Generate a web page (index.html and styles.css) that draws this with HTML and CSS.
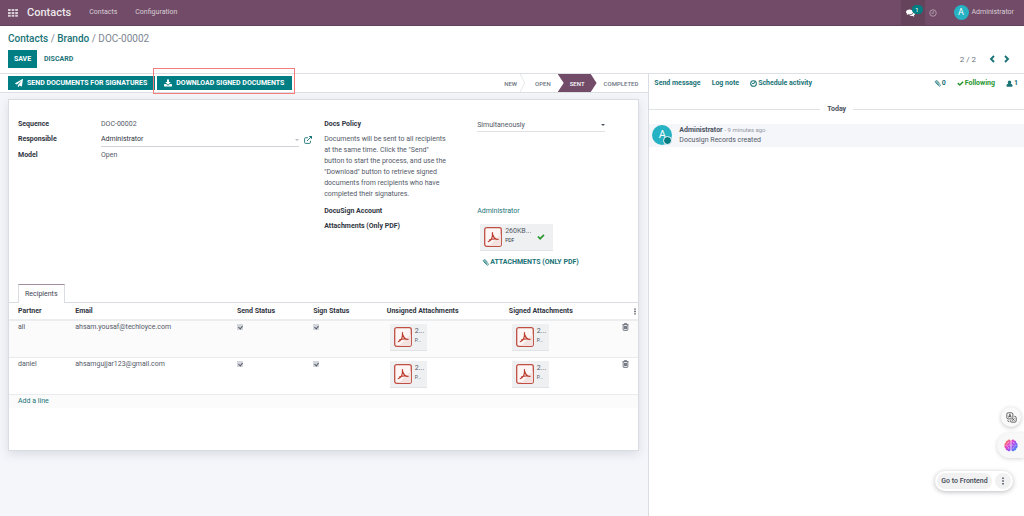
FILE: index.html
```html
<!DOCTYPE html>
<html lang="en">
<head>
<meta charset="utf-8">
<title>Contacts - DOC-00002</title>
<link rel="stylesheet" href="styles.css">
</head>
<body>
<svg class="sprite" aria-hidden="true">
  <symbol id="grid" viewBox="0 0 10 8"><path d="M0 0h2.700v2H0zM3.600 0h2.700v2H3.600zM7.200 0h2.700v2H7.200zM0 2.900h2.700v2H0zM3.600 2.900h2.700v2H3.600zM7.200 2.900h2.700v2H7.200zM0 5.800h2.700v2H0zM3.600 5.800h2.700v2H3.600zM7.200 5.800h2.700v2H7.200z"/></symbol>
  <symbol id="plane" viewBox="0 0 1792 1792"><path d="M1764 11q33 24 27 64l-256 1536q-5 29-32 45-14 8-31 8-11 0-24-5l-453-185-242 295q-18 23-49 23-13 0-22-4-19-7-30.500-23.500t-11.500-36.500v-349l864-1059-1069 925-395-162q-37-14-40-55-2-40 32-59l1664-960q15-9 32-9 20 0 36 11z"/></symbol>
  <symbol id="download" viewBox="0 0 16 16"><path d="M6 1h4v5h3.500L8 11.500 2.500 6H6zM1 10h3.500L7 12.500q1 .8 2 0L11.500 10H15q1 0 1 1v3q0 1-1 1H1q-1 0-1-1v-3q0-1 1-1z"/></symbol>
  <symbol id="comments" viewBox="0 0 18 16"><path d="M7 1c4 0 7 2.200 7 5s-3 5-7 5c-.8 0-1.500-.1-2.200-.3C3.500 11.700 2 12 1 12c.8-.7 1.300-1.400 1.400-2.400C.9 8.700 0 7.400 0 6c0-2.800 3-5 7-5z"/><path d="M15.200 5.500c1.700.9 2.800 2.300 2.800 3.900 0 1.400-.8 2.600-2.200 3.500.1.900.6 1.700 1.400 2.300-1.400 0-2.800-.4-3.900-1.300-2.500.4-5.300-.2-6.800-1.500 4.700 0 9-2.400 8.700-6.900z"/></symbol>
  <symbol id="clock" viewBox="0 0 16 16"><g fill="none" stroke="currentColor" stroke-width="2"><circle cx="8" cy="8" r="6.500"/><path d="M8.500 4v4.500H5"/></g></symbol>
  <symbol id="clock-check" viewBox="0 0 16 16"><g fill="none" stroke="currentColor" stroke-width="2.400"><circle cx="8" cy="8" r="6.500"/><path d="M5 8h3.500L12 3.500"/></g></symbol>
  <symbol id="left" viewBox="0 0 12 16"><path d="M10 2L4 8l6 6" fill="none" stroke="currentColor" stroke-width="3.800"/></symbol>
  <symbol id="right" viewBox="0 0 12 16"><path d="M2 2l6 6-6 6" fill="none" stroke="currentColor" stroke-width="3.800"/></symbol>
  <symbol id="clip" viewBox="0 0 16 16"><path d="M12.500 7L7 1.800C5 .2 1.500 3.200 3.300 5.500l7.500 7.800c2.500 2.300 5-.4 3-2.700L7.500 4.300C6 3.200 4.500 4.700 5.700 6.200L11 11.500" fill="none" stroke="currentColor" stroke-width="1.800"/></symbol>
  <symbol id="check" viewBox="0 0 1792 1792"><path d="M1671 566q0 40-28 68l-724 724-136 136q-28 28-68 28t-68-28l-136-136-362-362q-28-28-28-68t28-68l136-136q28-28 68-28t68 28l294 295 656-657q28-28 68-28t68 28l136 136q28 28 28 68z"/></symbol>
  <symbol id="user" viewBox="0 0 14 16"><path d="M7 1a4 4 0 0 1 4 4c0 1.500-.6 2.800-1.500 3.500 3 .3 4.500 2 4.500 5 0 1-.9 1.800-2 1.800H2c-1.100 0-2-.8-2-1.800 0-3 1.500-4.700 4.500-5C3.600 7.800 3 6.500 3 5a4 4 0 0 1 4-4z"/></symbol>
  <symbol id="external" viewBox="0 0 16 16"><path d="M8 3.500H3Q1.200 3.500 1.200 5.200V13q0 1.800 1.800 1.800h8q1.800 0 1.800-1.800V9.500M6 10l7.500-7.500" fill="none" stroke="currentColor" stroke-width="1.800"/><path d="M9.500 0H16v6.500z"/></symbol>
  <symbol id="trash" viewBox="0 0 14 16"><path d="M1 3.300h12M4.800 3V1.200h4.400V3M2.300 3.500v9.800q0 1.500 1.500 1.500h6.400q1.500 0 1.500-1.500V3.500M5 5.800v6.500M7 5.800v6.500M9 5.800v6.500" fill="none" stroke="currentColor" stroke-width="1.400"/></symbol>
  <symbol id="dots" viewBox="0 0 4 16"><path d="M.5 1h3v3h-3zM.5 6.500h3v3h-3zM.5 12h3v3h-3z"/></symbol>
  <symbol id="pdf" viewBox="0 0 18 20"><rect x=".7" y=".7" width="16.600" height="18.600" rx="2" fill="#fdf6f5" stroke="#bf4f43" stroke-width="1.300"/><path d="M5 19L17 7v10.500q0 1.500-1.500 1.500z" fill="#f3e2e0"/><path d="M8.500 5.500c.2 3 .2 4.500-1 6.500-1 1.600-2.200 2.700-3.200 2.700M8.700 7.500c.7 2.800 2.300 4.700 5.300 5M5.500 13c2.500-1.300 5-1.500 8.500-.7" fill="none" stroke="#bb3d30" stroke-width="1.200" stroke-linecap="round"/></symbol>
  <symbol id="translate" viewBox="0 0 20 20"><g fill="none" stroke="currentColor" stroke-width="1.600"><rect x="1.500" y="1.500" width="11" height="11" rx="2.500"/><path d="M4.500 10L7 4l2.500 6M5.300 8.300h3.400M15 8h1q2.500 0 2.500 2.500V16q0 2.500-2.500 2.500h-5.500Q8 18.500 8 16v-1M11 16l4.500-4.500M11.500 12l4 4M3 15q.3 2.500 3 2.700"/></g></symbol>
  <symbol id="brain" viewBox="0 0 24 22">
    <linearGradient id="tint" gradientUnits="userSpaceOnUse" x1="2" y1="2" x2="22" y2="20"><stop offset="0" stop-color="#ff8a3c"/><stop offset=".35" stop-color="#e645c8"/><stop offset=".65" stop-color="#8b55f6"/><stop offset="1" stop-color="#2fa4f8"/></linearGradient>
    <path fill="url(#tint)" d="M11.300 2.500C10.300.2 7 .3 6.200 2.500 3.800 2.600 2.700 4.500 3.200 6.400.8 7.200.2 9.400 1.200 11-.2 13 .9 15.200 2.800 15.900c-.1 2.400 1.700 3.700 3.500 3.500 1 2 4.200 2 5-.2zM12.700 2.500c1-2.300 4.300-2.200 5.100 0 2.400.1 3.500 2 3 3.900 2.400.8 3 3 2 4.600 1.400 2 .3 4.200-1.600 4.900.1 2.400-1.700 3.700-3.500 3.500-1 2-4.200 2-5-.2z"/>
    <path fill="none" stroke="#fff" stroke-width=".8" d="M3 10q3 0 3 3M8.500 4.500q0 3-3 3M8 10.500h3M8.500 17q0-3-2-3M21 10q-3 0-3 3M15.500 4.500q0 3 3 3M16 10.500h-3M15.500 17q0-3 2-3"/>
  </symbol>
</svg>

<header class="navbar">
  <button class="nav-apps" aria-label="Apps"><svg><use href="#grid"/></svg></button>
  <a class="nav-brand" href="#">Contacts</a>
  <nav class="nav-menu"><a href="#">Contacts</a><a href="#">Configuration</a></nav>
  <div class="nav-tools">
    <button class="nav-chat" aria-label="Messages"><svg><use href="#comments"/></svg><span class="count">1</span></button>
    <button class="nav-clock" aria-label="Activities"><svg><use href="#clock"/></svg></button>
    <button class="nav-user"><span class="avatar">A</span>Administrator</button>
  </div>
</header>

<section class="control">
  <nav class="breadcrumb"><a href="#">Contacts</a> / <a href="#">Brando</a> / <span>DOC-00002</span></nav>
  <div class="control-row">
    <button class="btn save">SAVE</button>
    <button class="btn-text">DISCARD</button>
    <div class="pager"><span>2 / 2</span><button aria-label="Previous"><svg><use href="#left"/></svg></button><button aria-label="Next"><svg><use href="#right"/></svg></button></div>
  </div>
</section>

<div class="content">
  <main class="form">
    <div class="statusbar">
      <button class="btn action"><svg><use href="#plane"/></svg>SEND DOCUMENTS FOR SIGNATURES</button>
      <span class="marked"><button class="btn action"><svg><use href="#download"/></svg>DOWNLOAD SIGNED DOCUMENTS</button></span>
      <ol class="stages"><li class="stage-new">NEW</li><li>OPEN</li><li class="current">SENT</li><li>COMPLETED</li></ol>
    </div>
    <div class="sheet-area">
      <div class="sheet">
        <div class="groups">
          <div class="group group-left">
            <span class="label">Sequence</span><span>DOC-00002</span>
            <label class="label" for="responsible">Responsible</label>
            <div class="many2one"><div class="input-wrap"><input id="responsible" value="Administrator"><span class="caret pale"></span></div><button aria-label="Open record"><svg><use href="#external"/></svg></button></div>
            <span class="label">Model</span><span>Open</span>
          </div>
          <div class="group group-right">
            <label class="label" for="policy">Docs Policy</label>
            <div class="select-wrap"><select id="policy"><option>Simultaneously</option></select><span class="caret"></span></div>
            <p class="help">Documents will be sent to all recipients at the same time. Click the "Send" button to start the process, and use the "Download" button to retrieve signed documents from recipients who have completed their signatures.</p><span></span>
            <span class="label">DocuSign Account</span><a href="#">Administrator</a>
            <span class="label">Attachments (Only PDF)</span>
            <div class="files">
              <div class="file wide"><svg class="pdf"><use href="#pdf"/></svg><span class="file-text"><span>260KB...</span><small>PDF</small></span><svg class="ok"><use href="#check"/></svg></div>
              <button class="attach"><svg><use href="#clip"/></svg>ATTACHMENTS (ONLY PDF)</button>
            </div>
          </div>
        </div>
        <div class="tabs" role="tablist"><button class="tab" role="tab" aria-selected="true">Recipients</button></div>
        <table class="lines">
          <colgroup><col class="c-partner"><col class="c-email"><col class="c-send"><col class="c-sign"><col class="c-unsigned"><col class="c-signed"><col class="c-tools"></colgroup>
          <thead><tr><th>Partner</th><th>Email</th><th>Send Status</th><th>Sign Status</th><th>Unsigned Attachments</th><th>Signed Attachments</th><th class="tools"><button aria-label="Optional columns"><svg class="dots"><use href="#dots"/></svg></button></th></tr></thead>
          <tbody>
            <tr class="odd"><td>ali</td><td>ahsam.yousaf@techloyce.com</td><td><input type="checkbox" aria-label="Sent" checked disabled></td><td><input type="checkbox" aria-label="Signed" checked disabled></td>
              <td><div class="file"><svg class="pdf"><use href="#pdf"/></svg><span class="file-text"><span>2...</span><small>P...</small></span></div></td>
              <td><div class="file"><svg class="pdf"><use href="#pdf"/></svg><span class="file-text"><span>2...</span><small>P...</small></span></div></td>
              <td class="remove"><button aria-label="Delete row"><svg><use href="#trash"/></svg></button></td></tr>
            <tr><td>daniel</td><td>ahsamgujjar123@gmail.com</td><td><input type="checkbox" aria-label="Sent" checked disabled></td><td><input type="checkbox" aria-label="Signed" checked disabled></td>
              <td><div class="file"><svg class="pdf"><use href="#pdf"/></svg><span class="file-text"><span>2...</span><small>P...</small></span></div></td>
              <td><div class="file"><svg class="pdf"><use href="#pdf"/></svg><span class="file-text"><span>2...</span><small>P...</small></span></div></td>
              <td class="remove"><button aria-label="Delete row"><svg><use href="#trash"/></svg></button></td></tr>
            <tr class="odd add"><td colspan="7"><a href="#">Add a line</a></td></tr>
          </tbody>
        </table>
      </div>
    </div>
  </main>

  <aside class="chatter">
    <div class="chat-bar">
      <button>Send message</button><button>Log note</button><button class="schedule"><svg><use href="#clock-check"/></svg>Schedule activity</button>
      <div class="chat-info"><button><svg><use href="#clip"/></svg>0</button><button class="following"><svg><use href="#check"/></svg>Following</button><button><svg><use href="#user"/></svg>1</button></div>
    </div>
    <div class="day">Today</div>
    <article class="message">
      <span class="avatar large">A</span>
      <div><div class="message-head"><b>Administrator</b> <time>- 9 minutes ago</time></div><div>Docusign Records created</div></div>
    </article>
  </aside>
</div>

<div class="floating">
  <button class="float-translate" aria-label="Translate"><svg><use href="#translate"/></svg></button>
  <button class="float-brain" aria-label="Assistant"><svg><use href="#brain"/></svg></button>
  <div class="float-bar"><button class="frontend">Go to Frontend</button><button class="more" aria-label="More"><svg><use href="#dots"/></svg></button></div>
</div>
</body>
</html>
```
FILE: styles.css
```css
* { box-sizing: border-box; }
body { margin: 0; min-height: 100vh; display: flex; flex-direction: column; font: 7px/11px Roboto, "Liberation Sans", sans-serif; color: #535a68; background: #fff; }
button, input, select { font: inherit; color: inherit; background: none; border: 0; padding: 0; margin: 0; }
button { display: flex; align-items: center; white-space: nowrap; }
a { color: #1a7377; text-decoration: none; }
svg { display: block; flex: none; width: 8px; height: 8px; fill: currentColor; }
.sprite { position: absolute; width: 0; height: 0; }

.navbar { display: flex; align-items: stretch; height: 26px; padding: 0 8px; background: #714b67; border-bottom: 1px solid #624159; color: #d9ced6; }
.navbar a { color: inherit; }
.nav-apps svg { width: 10px; height: 8px; }
.nav-brand { align-self: center; margin-left: 9px; font-size: 11px; font-weight: 500; }
.navbar .nav-brand { color: #eee8ec; }
.nav-menu { display: flex; align-items: center; gap: 18px; margin-left: 18px; }
.nav-tools { display: flex; margin-left: auto; }
.nav-chat { position: relative; width: 24px; padding-left: 5px; background: #64435b; color: #fff; }
.nav-chat svg { width: 9px; }
.count { position: absolute; left: 11px; top: 5px; width: 11px; height: 9px; border-radius: 5px; background: #017e84; font-size: 6px; line-height: 9px; text-align: center; }
.nav-clock { margin: 0 17px 0 4px; opacity: .6; }
.nav-user { gap: 3px; padding-right: 2px; }
.avatar { display: grid; place-items: center; width: 15px; height: 15px; border-radius: 50%; background: #27b2c3; color: #fff; font-size: 9px; }

.control { padding: 7px 14px 5px 8px; border-bottom: 1px solid #dcdfe3; }
.breadcrumb { font-size: 10px; line-height: 12px; color: #7c8492; }
.breadcrumb a { font-weight: 500; }
.control-row { display: flex; align-items: center; margin-top: 5px; }
.btn { background: #017e84; color: #fff; font-weight: 700; justify-content: center; }
.save { width: 29px; height: 18px; }
.btn-text { margin-left: 7px; color: #1a7377; font-weight: 700; }
.pager { display: flex; align-items: center; gap: 9px; margin-left: auto; color: #1a7377; }
.pager span { margin-right: 4px; color: #6b7280; font-size: 8px; }
.pager svg { width: 6px; height: 8px; }

.content { flex: 1; display: flex; }
.form { flex: 649; min-width: 0; display: flex; flex-direction: column; border-right: 1px solid #d9dce1; }
.statusbar { display: flex; align-items: center; height: 19px; padding-left: 8px; border-bottom: 1px solid #dcdfe3; }
.action { height: 14px; padding: 0 8px 0 7px; gap: 4px; }
.marked { position: relative; margin-left: 2px; }
.marked::after { content: ""; position: absolute; inset: -8px -3px -4px -4px; border: 1px solid #f47c7c; pointer-events: none; }
.stages { display: flex; align-self: stretch; align-items: center; margin: 0 0 0 auto; padding: 0; list-style: none; color: #6d7481; font-size: 6px; font-weight: 500; }
.stages li { display: grid; align-items: center; height: 100%; padding: 0 7px; }
.stages .stage-new { position: relative; padding-right: 11px; }
.stage-new::after { content: ""; position: absolute; right: 1px; top: 2px; width: 13px; height: 13px; border: solid #dcdfe3; border-width: 1px 1px 0 0; transform: scaleX(.5) rotate(45deg); }
.stages .current { padding: 0 12px; background: #714b67; color: #fff; clip-path: polygon(0 0, 33px 0, 100% 50%, 33px 100%, 0 100%, 6px 50%); }
.stages li:last-child { padding: 0 10px 0 7px; }

.sheet-area { flex: 1; padding: 6px 9px 60px 8px; background: #f5f6fa; }
.sheet { min-height: 352px; padding-top: 19px; background: #fff; border: 1px solid #d9dce1; box-shadow: 0 3px 10px #d8dbe2; }
.groups { display: grid; grid-template-columns: 295fr 305fr; gap: 11px; padding: 0 9px; }
.group { display: grid; gap: 4px 0; align-content: start; }
.group-left { grid-template-columns: 83px 1fr; }
.group-right { grid-template-columns: 128px 128px; column-gap: 25px; }
.label { color: #2f3542; font-weight: 700; }
.many2one { display: flex; align-items: center; gap: 5px; height: 12px; padding-right: 1px; }
.input-wrap, .select-wrap { position: relative; flex: 1; display: flex; border-bottom: 1px solid #cfd2d7; height: 13px; }
.input-wrap input { width: 100%; color: #2f3542; }
.select-wrap { height: 13px; margin-bottom: -2px; border-color: #dfe1e5; }
.select-wrap select { width: 100%; appearance: none; }
.caret { position: absolute; right: 0; top: 5px; border: 2px solid transparent; border-top-color: #4b5563; }
.caret.pale { border-top-color: #b8bcc4; }
.many2one svg { color: #1a7377; }
.help { margin: 0 0 2px; padding-right: 3px; }
.files { height: 63px; padding-top: 3px; }
.file { display: flex; align-items: flex-start; gap: 3px; width: 37px; height: 27px; padding: 3px 4px; background: #eff0f1; border-bottom: 1px solid #e2e3e5; }
.file.wide { width: 73px; margin: 0 0 0 3px; }
.pdf { width: 18px; height: 20px; }
.file-text { display: flex; flex-direction: column; line-height: 9px; }
.file-text small { font-size: 5px; }
.file.wide small { color: #2f3542; }
.ok { align-self: center; margin-left: 3px; color: #28962f; }
.attach { margin: 6px 0 0 5px; gap: 1px; color: #1a7377; font-weight: 700; }
.attach svg, .chat-info svg { width: 7px; height: 7px; }

.tabs { padding: 0 9px; border-bottom: 1px solid #d9dce1; }
.tab { height: 19px; margin-bottom: -1px; padding: 0 6px; background: #fff; border: 1px solid #d9dce1; border-top-color: #a58f9f; border-bottom: 0; color: #3d4452; }
.lines { width: 100%; table-layout: fixed; border-collapse: collapse; text-align: left; }
.c-partner { width: 9.100%; }
.c-email { width: 25.700%; }
.c-send { width: 12.100%; }
.c-sign { width: 11.700%; }
.c-unsigned { width: 19.400%; }
.c-signed { width: 18%; }
th { height: 17px; padding: 0 0 0 9px; border-bottom: 2px solid #ecedef; color: #2f3542; font-weight: 700; }
td { height: 37px; padding: 1px 0 0 9px; border-bottom: 1px solid #eaebed; vertical-align: top; }
.odd { background: #fbfbfb; }
.add td { height: 14px; border: 0; }
td .file { margin: 2px 0 0 3px; }
td input { appearance: none; display: block; width: 6px; height: 6px; margin-top: 2px; background: #d3d6da; }
td input::after { content: ""; display: block; width: 2px; height: 3px; margin: 1px 2px; border: solid #555d6b; border-width: 0 1px 1px 0; transform: rotate(40deg); }
.tools { padding: 0 2px 0 0; }
.tools button { margin-left: auto; }
.dots { width: 2px; height: 7px; }
.remove svg { width: 7px; height: 8px; margin-top: 1px; color: #3d4452; }

.chatter { flex: 375; min-width: 0; }
.chat-bar { display: flex; gap: 11px; height: 19px; padding: 0 6px 0 5px; color: #1a7377; font-weight: 700; }
.chat-bar svg { margin-right: 1px; }
.schedule svg { width: 7px; height: 7px; }
.chat-info { display: flex; gap: 11px; margin-left: auto; }
.following { color: #28962f; }
.day { display: flex; align-items: center; gap: 7px; margin-top: 11px; color: #4b5260; font-weight: 700; }
.day::before, .day::after { content: ""; flex: 1; border-top: 1px solid #dfe1e5; }
.message { display: flex; gap: 7px; margin-top: 9px; padding: 1px 4px 0 3px; height: 23px; background: #f5f6fa; line-height: 10px; }
.message-head b { color: #4b5260; }
.message-head time { color: #9298a3; font-size: 6px; }
.large { position: relative; width: 20px; height: 20px; font-size: 11px; }
.large::after { content: ""; position: absolute; right: 0; bottom: 0; width: 7px; height: 7px; border: 1px solid #f5f6fa; border-radius: 50%; background: #017e84; }

.floating { position: fixed; right: 0; bottom: 25px; display: flex; flex-direction: column; align-items: flex-end; }
.floating button { justify-content: center; }
.float-translate { width: 20px; height: 20px; margin-right: 3px; border-radius: 50%; background: #fafafa; box-shadow: 0 1px 4px #c5c5c9; }
.float-translate svg { width: 11px; height: 11px; color: #4d4d4d; }
.float-brain { width: 27px; height: 25px; margin-top: 6px; border-radius: 13px 0 0 13px; background: #f8f8f9; box-shadow: 0 1px 4px #d5d5d9; }
.float-brain svg { width: 14px; height: 13px; }
.float-bar { display: flex; gap: 3px; margin: 13px 11px 0 0; padding: 2px; border-radius: 10px; background: #fff; box-shadow: 0 1px 5px #bbbbc0; }
.frontend { width: 55px; height: 16px; border-radius: 8px; background: #f1f1f2; color: #414855; font-weight: 500; }
.more { width: 16px; height: 16px; border-radius: 50%; background: #f1f1f2; color: #414855; }
.more svg { width: 2px; height: 8px; }
```
